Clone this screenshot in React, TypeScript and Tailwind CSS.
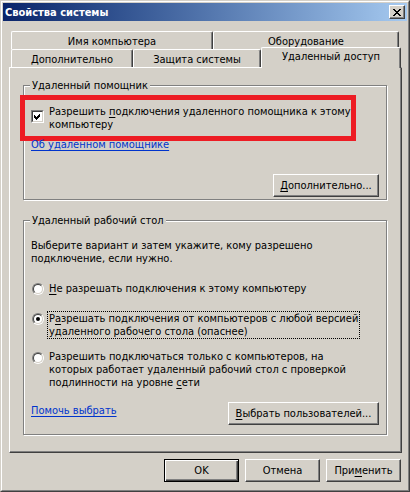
import React from "react";

const raised =
  "border border-t-white border-l-white border-r-[#404040] border-b-[#404040] shadow-[inset_-1px_-1px_0_#808080] bg-[#d4d0c8]";

function Btn({ children, w, def }: { children: React.ReactNode; w: string; def?: boolean }) {
  const cls = def
    ? "border border-black shadow-[inset_1px_1px_0_#fff,inset_-1px_-1px_0_#404040,inset_-2px_-2px_0_#808080] bg-[#d4d0c8]"
    : raised;
  return (
    <div className={`${cls} ${w} h-[23px] flex-none flex items-center justify-center leading-[13px]`}>
      {children}
    </div>
  );
}

function U({ children }: { children: React.ReactNode }) {
  return <span className="underline underline-offset-[2px]">{children}</span>;
}

function Tab({ label, w, selected }: { label: string; w: string; selected?: boolean }) {
  if (selected) {
    return (
      <div
        className={`${w} h-[21px] -mb-px relative z-10 flex-none bg-[#d4d0c8] border-t border-l border-r border-t-white border-l-white border-r-[#404040] shadow-[inset_-1px_0_0_#808080] rounded-t-[2px] text-center pt-[2px] leading-[13px]`}
      >
        {label}
      </div>
    );
  }
  return (
    <div
      className={`${w} h-[18px] flex-none border-t border-l border-r border-t-white border-l-white border-r-[#404040] shadow-[inset_-1px_0_0_#808080] rounded-t-[2px] text-center pt-[3px] leading-[13px]`}
    >
      {label}
    </div>
  );
}

function Radio({ checked }: { checked?: boolean }) {
  return (
    <div className="w-[12px] h-[12px] flex-none rounded-full border border-t-[#808080] border-l-[#808080] border-r-white border-b-white flex">
      <div className="flex-1 rounded-full border border-t-[#404040] border-l-[#404040] border-r-[#d4d0c8] border-b-[#d4d0c8] bg-white flex items-center justify-center">
        {checked && <div className="w-[4px] h-[4px] rounded-full bg-black" />}
      </div>
    </div>
  );
}

function Checkbox() {
  return (
    <div className="w-[13px] h-[13px] flex-none border border-t-[#808080] border-l-[#808080] border-r-white border-b-white flex">
      <div className="flex-1 border border-t-[#404040] border-l-[#404040] border-r-[#d4d0c8] border-b-[#d4d0c8] bg-white flex items-center justify-center">
        <svg width="9" height="9" viewBox="0 0 9 9" shapeRendering="crispEdges">
          <path
            d="M1 3h1v1h1v1h1v-1h1v-1h1v-1h1v3h-1v1h-1v1h-1v1h-1v-1h-1v-1h-1z"
            fill="#000"
          />
        </svg>
      </div>
    </div>
  );
}

function Group({ title, h, mt, children }: { title: string; h: string; mt: string; children: React.ReactNode }) {
  return (
    <div
      className={`${mt} ${h} w-[364px] flex-none border border-[#808080] shadow-[inset_1px_1px_0_#fff,1px_1px_0_#fff] flex flex-col`}
    >
      <div className="-mt-[7px] ml-[6px] px-[2px] w-fit bg-[#d4d0c8] leading-[13px]">{title}</div>
      {children}
    </div>
  );
}

export default function App() {
  return (
    <div className="w-[410px] h-[492px] bg-[#d4d0c8] text-black text-[11px] leading-[13px] font-[family-name:'DejaVu_Sans_Condensed','Liberation_Sans',sans-serif] border border-t-[#d4d0c8] border-l-[#d4d0c8] border-r-[#404040] border-b-[#404040] flex">
      <div className="flex-1 border border-t-white border-l-white border-r-[#808080] border-b-[#808080] p-px flex flex-col">
        {/* Title bar */}
        <div className="h-[18px] flex-none flex items-center bg-linear-to-r from-[#0a246a] to-[#a6caf0] pl-[2px] pr-[2px]">
          <span className="text-white font-bold text-[11px] leading-[13px]">Свойства системы</span>
          <div className={`ml-auto w-[16px] h-[14px] ${raised} flex items-center justify-center`}>
            <svg width="8" height="7" viewBox="0 0 8 7" shapeRendering="crispEdges">
              <path
                d="M0 0h2v1h1v1h2v-1h1v-1h2v1h-1v1h-1v1h-1v1h1v1h1v1h1v1h-2v-1h-1v-1h-2v1h-1v1h-2v-1h1v-1h1v-1h1v-1h-1v-1h-1v-1h-1z"
                fill="#000"
              />
            </svg>
          </div>
        </div>

        {/* Body */}
        <div className="flex-1 flex flex-col pl-[6px] pr-[5px] pt-[10px]">
          {/* Tabs */}
          <div className="flex h-[18px] ml-[2px] flex-none">
            <Tab label="Имя компьютера" w="w-[202px]" />
            <Tab label="Оборудование" w="w-[186px]" />
          </div>
          <div className="flex h-[18px] ml-[2px] items-end flex-none">
            <Tab label="Дополнительно" w="w-[122px]" />
            <Tab label="Защита системы" w="w-[128px]" />
            <Tab label="Удаленный доступ" w="w-[140px]" selected />
          </div>

          {/* Panel */}
          <div className="h-[386px] flex-none border border-t-white border-l-white border-r-[#404040] border-b-[#404040] shadow-[inset_-1px_-1px_0_#808080] pl-[13px] flex flex-col">
            <Group title="Удаленный помощник" h="h-[115px]" mt="mt-[17px]">
              <div className="mt-[3px] -ml-[4px] w-[336px] h-[46px] flex-none border-[5px] border-[#ed1c24] flex items-start">
                <div className="mt-[10px] ml-[6px]">
                  <Checkbox />
                </div>
                <div className="ml-[5px] mt-[5px] whitespace-nowrap">
                  Разрешить <U>п</U>одключения удаленного помощника к этому
                  <br />
                  компьютеру
                </div>
              </div>
              <div className="-mt-[3px] ml-[7px] w-fit text-[#0033cc] underline underline-offset-[2px]">
                Об удаленном помощнике
              </div>
              <div className="mt-[23px] self-end mr-[7px]">
                <Btn w="w-[106px]">
                  <span>
                    <U>Д</U>ополнительно...
                  </span>
                </Btn>
              </div>
            </Group>

            <Group title="Удаленный рабочий стол" h="h-[215px]" mt="mt-[20px]">
              <div className="ml-[7px] mt-[12px] whitespace-nowrap">
                Выберите вариант и затем укажите, кому разрешено
                <br />
                подключение, если нужно.
              </div>
              <div className="ml-[7px] mt-[17px] flex items-start">
                <div className="mt-[1px] ml-[1px]">
                  <Radio />
                </div>
                <div className="ml-[5px] whitespace-nowrap">
                  <U>Н</U>е разрешать подключения к этому компьютеру
                </div>
              </div>
              <div className="ml-[7px] mt-[16px] flex items-start">
                <div className="mt-[2px] ml-[1px]">
                  <Radio checked />
                </div>
                <div className="ml-[3px] border border-dotted border-black pl-px pr-px whitespace-nowrap">
                  Р<U>а</U>зрешать подключения от компьютеров с любой версией
                  <br />
                  удаленного рабочего стола (опаснее)
                </div>
              </div>
              <div className="ml-[7px] mt-[11px] flex items-start">
                <div className="mt-[2px] ml-[1px]">
                  <Radio />
                </div>
                <div className="ml-[5px] whitespace-nowrap">
                  Разрешить подключаться только с компьютеров, на
                  <br />
                  которых работает удаленный рабочий стол с проверкой
                  <br />
                  подлинности на уровне <U>с</U>ети
                </div>
              </div>
              <div className="mt-[13px] flex items-start">
                <div className="ml-[7px] mt-[2px] text-[#0033cc] underline underline-offset-[2px]">
                  Помочь выбрать
                </div>
                <div className="ml-auto mr-[7px]">
                  <Btn w="w-[151px]">
                    <span>
                      <U>В</U>ыбрать пользователей...
                    </span>
                  </Btn>
                </div>
              </div>
            </Group>
          </div>

          {/* Bottom buttons */}
          <div className="mt-[6px] flex justify-end gap-[6px] pr-[1px]">
            <Btn w="w-[75px]" def>
              OK
            </Btn>
            <Btn w="w-[75px]">Отмена</Btn>
            <Btn w="w-[75px]">
              <span>
                При<U>м</U>енить
              </span>
            </Btn>
          </div>
        </div>
      </div>
    </div>
  );
}
